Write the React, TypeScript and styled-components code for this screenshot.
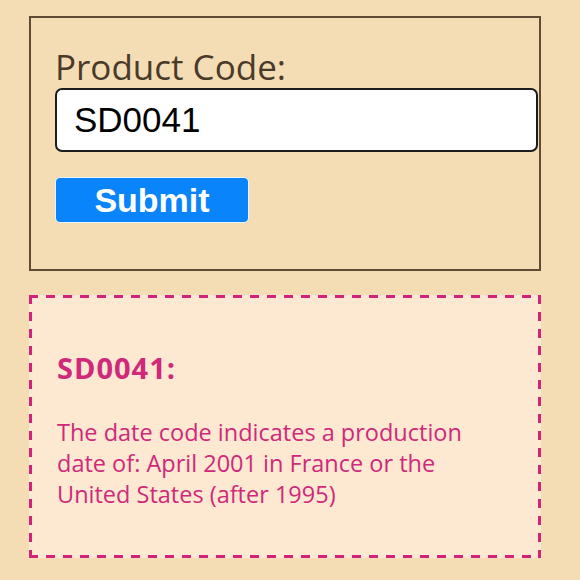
import React, { useState } from 'react';
import styled, { createGlobalStyle } from 'styled-components';

const GlobalStyle = createGlobalStyle`
  html, body {
    margin: 0;
    padding: 0;
    background: #f4ddb4;
  }
`;

const Page = styled.div`
  padding: 16px 39px 0 29px;
  display: flex;
  flex-direction: column;
  gap: 24px;
  font-family: 'Open Sans', 'Noto Sans', sans-serif;
`;

const LookupForm = styled.form`
  border: 2px solid #5e4a35;
  height: 255px;
  box-sizing: border-box;
  padding: 27px 3px 0 24px;
  display: flex;
  flex-direction: column;
`;

const Label = styled.label`
  font-size: 35px;
  line-height: 43px;
  color: #4a3a2a;
`;

const CodeInput = styled.input`
  box-sizing: border-box;
  width: 483px;
  height: 64px;
  border: 2px solid #1c1c1c;
  border-radius: 7px;
  background: #fff;
  padding: 0 17px;
  font-family: 'Liberation Sans', Arial, sans-serif;
  font-size: 35px;
  color: #000;
  outline: none;
`;

const SubmitButton = styled.button`
  margin-top: 25px;
  width: 194px;
  height: 46px;
  box-sizing: border-box;
  border: 1px solid #e9f2fb;
  border-radius: 5px;
  background: #0a84fa;
  color: #fff;
  font-family: 'Liberation Sans', Arial, sans-serif;
  font-weight: bold;
  font-size: 34px;
  line-height: 1;
  padding: 0;
  cursor: pointer;
`;

const dash = (dir: string) =>
  `repeating-linear-gradient(${dir}, #d2237a 0 9px, transparent 9px 17px)`;

const ResultCard = styled.section`
  height: 263px;
  box-sizing: border-box;
  background-color: #fde9d1;
  background-image: ${dash('to right')}, ${dash('to right')},
    ${dash('to bottom')}, ${dash('to bottom')};
  background-size: 100% 3px, 100% 3px, 3px 100%, 3px 100%;
  background-position: top left, bottom left, top left, top right;
  background-repeat: no-repeat;
  padding: 56px 24px 0 28px;
  color: #d0287a;
`;

const ResultTitle = styled.h2`
  margin: 0 0 32px;
  font-size: 29px;
  line-height: 34px;
  font-weight: bold;
  letter-spacing: 1px;
`;

const ResultText = styled.p`
  margin: 0;
  font-size: 23.5px;
  line-height: 31px;
  max-width: 440px;
`;

export default function App() {
  const [code, setCode] = useState('SD0041');

  return (
    <Page>
      <GlobalStyle />
      <LookupForm onSubmit={(e) => e.preventDefault()}>
        <Label htmlFor="code">Product Code:</Label>
        <CodeInput
          id="code"
          value={code}
          onChange={(e) => setCode(e.target.value)}
        />
        <SubmitButton type="submit">Submit</SubmitButton>
      </LookupForm>
      <ResultCard>
        <ResultTitle>SD0041:</ResultTitle>
        <ResultText>
          The date code indicates a production date of: April 2001 in France
          or the United States (after 1995)
        </ResultText>
      </ResultCard>
    </Page>
  );
}
